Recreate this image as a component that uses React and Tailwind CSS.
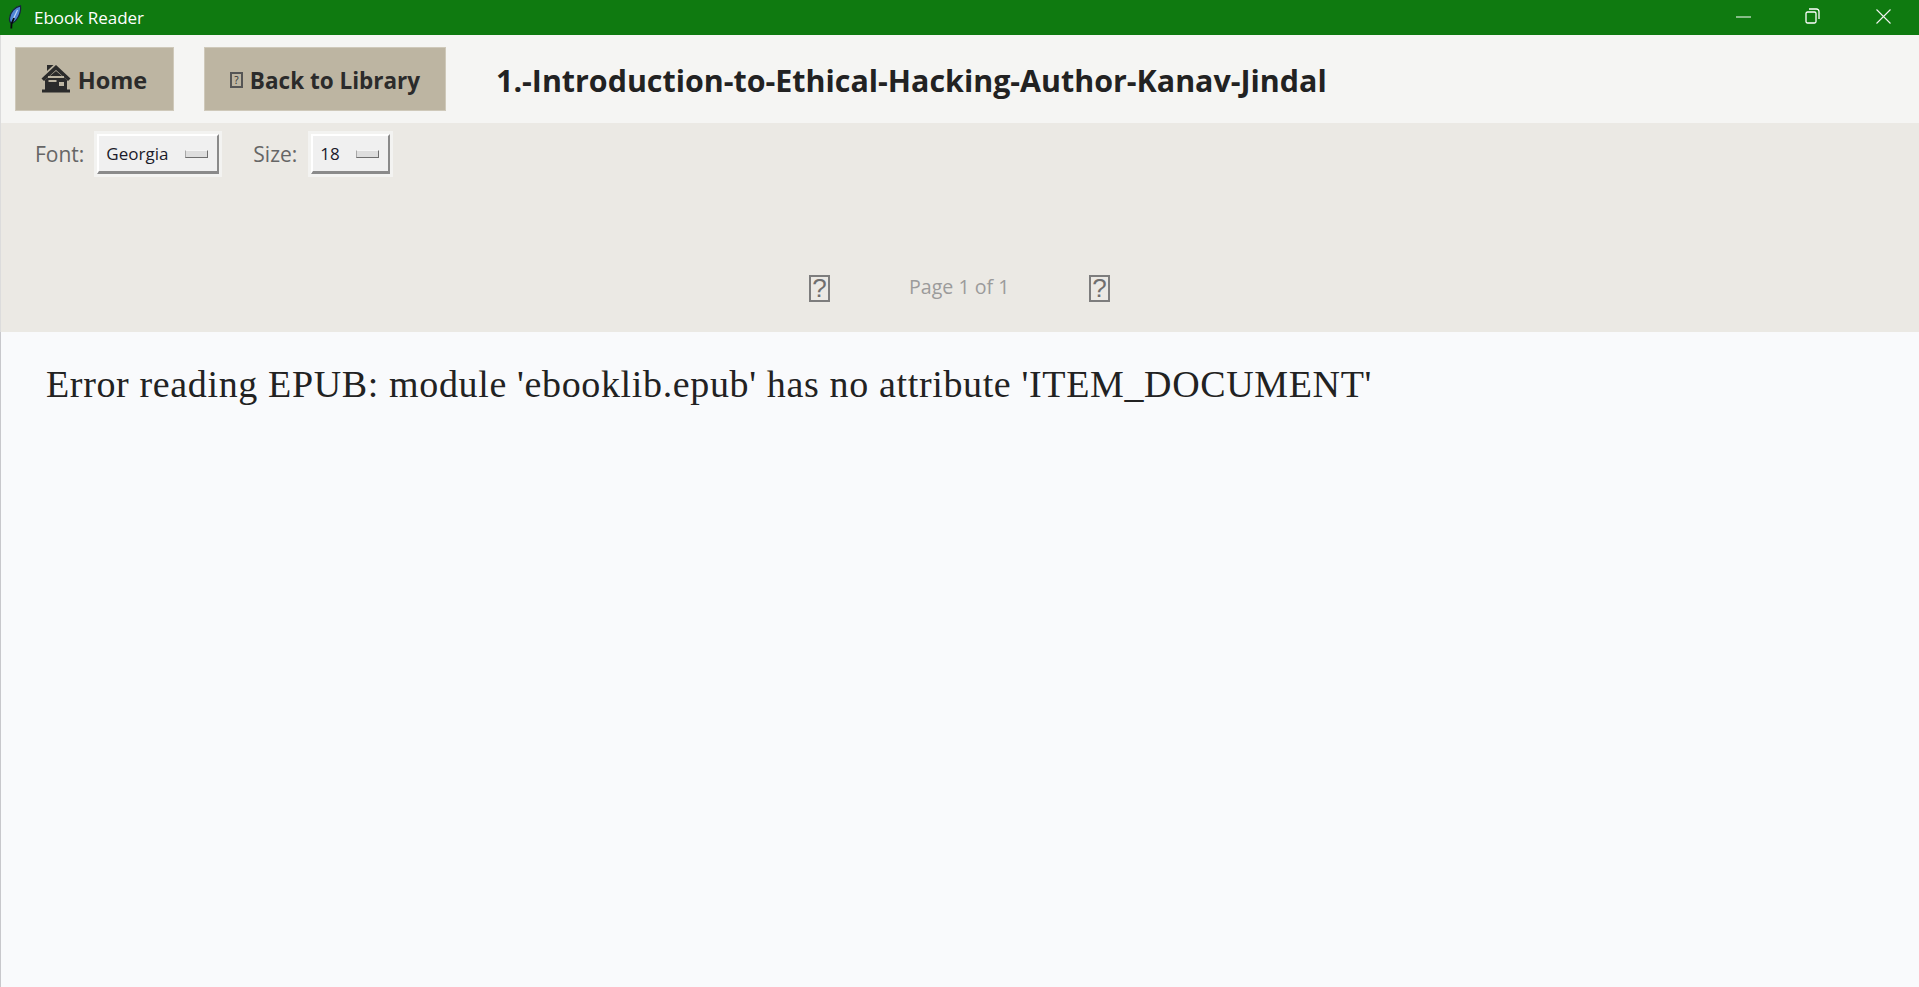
const sans = "font-['Open_Sans','Noto_Sans',sans-serif]";

function Feather() {
  return (
    <svg width="14" height="24" viewBox="0 0 14 24" className="shrink-0">
      <path d="M12.5 .8C7 2 2.2 7 1.5 13.5 1.3 15.5 2 17.5 3.5 18.5 8.5 16.5 13.5 9 12.5 .8z" fill="#4f86d6" stroke="#16263c" strokeWidth="1.2" />
      <path d="M9.5 5L5 14.5" fill="none" stroke="#bcd4f2" strokeWidth="1.2" />
      <path d="M6 13L3.5 19l-.2 4.5" fill="none" stroke="#07090c" strokeWidth="1.8" />
    </svg>
  );
}

function HomeIcon() {
  return (
    <svg width="30" height="29" viewBox="0 0 30 29" className="shrink-0">
      <path d="M15 1L.5 14.5 3 17 15 6l12 11 2.5-2.5z" fill="#2b2b2b" />
      <path d="M6 1h6.5L6 7z" fill="#2b2b2b" />
      <path d="M4 16L15 7l11 9v11H4z" fill="#2b2b2b" />
      <rect x="7" y="12" width="16" height="2" fill="#bdb5a2" />
      <rect x="9.5" y="18" width="6" height="9" fill="#2b2b2b" />
      <rect x="7.5" y="16" width="8" height="2" fill="#bdb5a2" />
      <rect x="18" y="18" width="5" height="4" fill="#bdb5a2" />
      <rect x="1" y="25.5" width="28" height="3" fill="#2b2b2b" />
    </svg>
  );
}

function Tofu({ className }) {
  return (
    <span className={`flex items-center justify-center border-2 border-[#7d7d7d] text-[#6f6f6f] font-['Liberation_Sans',sans-serif] ${className}`}>?</span>
  );
}

function Menu({ label, width, gap }) {
  return (
    <div className="bg-[#f3f3f1] p-[3px]">
      <div
        className={`flex h-[40px] items-center border-t-2 border-l-2 border-r-2 border-b-[3px] border-t-white border-l-white border-r-[#8a8a8a] border-b-[#8a8a8a] bg-[#f0f0f0] pl-[7px] text-[17px] text-[#1b1b2b] ${sans} ${width}`}
      >
        <span className={gap}>{label}</span>
        <span className="h-[8px] w-[23px] border border-t-[#f5f5f5] border-l-[#a8a8a8] border-r-[#6f6f6f] border-b-[#6f6f6f] bg-[#dedede]" />
      </div>
    </div>
  );
}

export default function App() {
  return (
    <div className={`flex h-[987px] w-full flex-col overflow-hidden bg-[#f9fafc] ${sans}`}>
      <div className="flex h-[35px] shrink-0 items-center bg-[#0f7a10] text-white">
        <div className="ml-[8px] mr-[12px] mb-[2px]"><Feather /></div>
        <span className="text-[17px]">Ebook Reader</span>
        <div className="ml-auto mb-[3px] flex items-center">
          <svg width="15" height="15" viewBox="0 0 15 15" className="mr-[54px]"><path d="M0 8h15" stroke="#fff" strokeWidth="1" /></svg>
          <svg width="15" height="16" viewBox="0 0 15 16" className="mr-[56px]"><path d="M1 5.5A1.5 1.5 0 0 1 2.5 4h7A1.5 1.5 0 0 1 11 5.5v8A1.5 1.5 0 0 1 9.5 15h-7A1.5 1.5 0 0 1 1 13.5zM4 1h7.5A2.5 2.5 0 0 1 14 3.5V11" fill="none" stroke="#fff" strokeWidth="1.3" /></svg>
          <svg width="15" height="15" viewBox="0 0 15 15" className="mr-[28px]"><path d="M.5.5l14 14M14.5.5l-14 14" stroke="#f2f2f2" strokeWidth="1.1" /></svg>
        </div>
      </div>

      <div className="flex h-[88px] shrink-0 items-center border-l border-[#dcdcdc] bg-[#f5f5f3] pl-[14px]">
        <div className="flex h-[64px] w-[159px] items-center justify-center gap-[7px] border border-[#cfc9ba] bg-[#bdb5a2] text-[23.5px] font-bold text-[#2b2b2b]">
          <span className="-ml-[1px] -mt-[1px]"><HomeIcon /></span>
          <span className="mt-[3px]">Home</span>
        </div>
        <div className="ml-[30px] flex h-[64px] w-[242px] items-center justify-center gap-[7px] border border-[#cfc9ba] bg-[#bdb5a2] text-[22.5px] font-bold text-[#2b2b2b]">
          <span className="mt-[2px] flex h-[16px] w-[13px] items-center justify-center border-2 border-[#555] text-[10px] font-normal leading-none">?</span>
          <span className="mt-[3px]">Back to Library</span>
        </div>
        <h1 className="ml-[50px] mt-[4px] text-[30.4px] font-bold leading-none text-[#222]">1.-Introduction-to-Ethical-Hacking-Author-Kanav-Jindal</h1>
      </div>

      <div className="flex h-[209px] shrink-0 flex-col border-l border-[#dcdcdc] bg-[#ebe9e4]">
        <div className="flex h-[62px] items-center pl-[34px] text-[21px] text-[#666]">
          <span className="mr-[10px] mt-[1px]">Font:</span>
          <Menu label="Georgia" width="w-[122px]" gap="mr-[17px]" />
          <span className="ml-[31px] mr-[11px] mt-[1px]">Size:</span>
          <Menu label="18" width="w-[79px]" gap="mr-[16px]" />
        </div>
        <div className="mt-[90px] flex items-center pl-[808px]">
          <Tofu className="h-[27px] w-[21px] text-[26px]" />
          <span className="-mt-[4px] ml-[79px] w-[99px] whitespace-nowrap text-[19.6px] text-[#9b9b9b]">Page 1 of 1</span>
          <Tofu className="ml-[81px] h-[27px] w-[21px] text-[26px]" />
        </div>
      </div>

      <div className="flex-1 border-l border-[#c8c8cc] bg-[#f9fafc] pl-[45px] pt-[30px] font-['Liberation_Serif',serif] text-[38px] leading-[44px] tracking-[0.64px] text-[#222]">
        Error reading EPUB: module 'ebooklib.epub' has no attribute 'ITEM_DOCUMENT'
      </div>
    </div>
  );
}
